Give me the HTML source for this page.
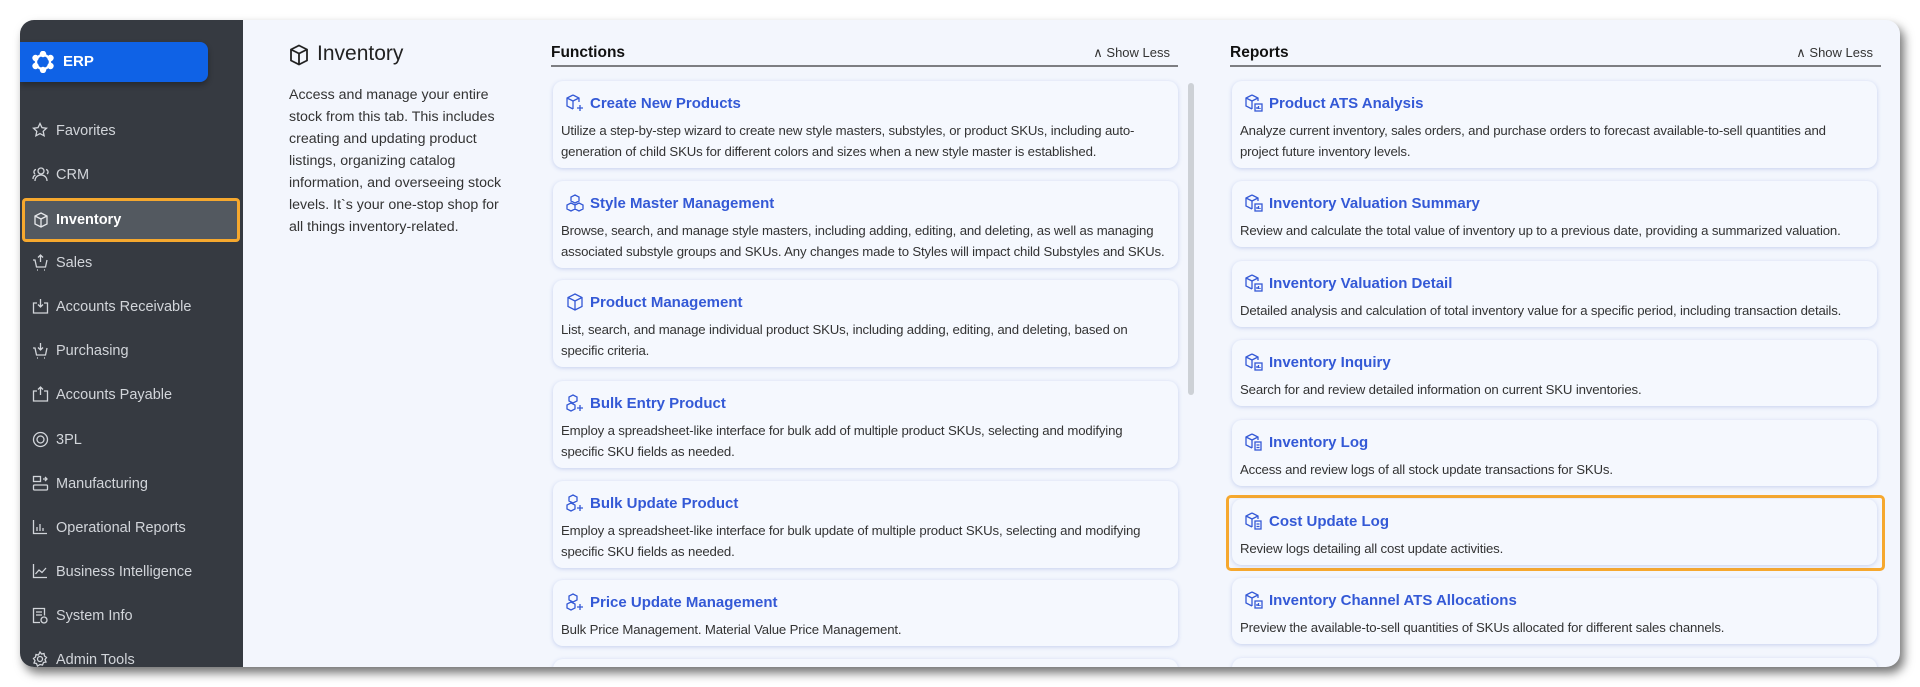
<!DOCTYPE html>
<html><head><meta charset="utf-8"><style>
*{box-sizing:border-box;margin:0;padding:0}
body{width:1920px;height:687px;background:#fff;font-family:"Liberation Sans",sans-serif;position:relative;overflow:hidden}
.win{position:absolute;left:20px;top:20px;width:1880px;height:647px;border-radius:14px;overflow:hidden;background:#f3f6fd;box-shadow:4px 6px 10px rgba(0,0,0,.55)}
.side{position:absolute;left:0;top:0;width:223px;height:647px;background:#363a41}
.erp{position:absolute;left:0;top:22px;width:188px;height:40px;background:#0f62e6;border-radius:0 8px 8px 0;color:#fff;font-weight:bold;font-size:15px;box-shadow:0 3px 6px rgba(0,0,0,.3)}
.erp svg{position:absolute;left:12px;top:9px}
.erp span{position:absolute;left:43px;top:11px}
.nav{position:absolute;left:0;width:223px;height:36px;color:#d2d5da;font-size:14.5px}
.nav svg{position:absolute;left:12px;top:9px}
.nav span{position:absolute;left:36px;top:10px}
.nav.act{left:2px;width:218px;height:44px;background:#535960;border:3px solid #f6a82e;border-radius:4px;color:#fff;font-weight:bold}
.nav.act svg{left:8px;top:11px}.nav.act span{left:31px;top:11px}
.title{position:absolute;left:269px;top:22px;font-size:21px;color:#222}
.title svg{position:absolute;left:0;top:2px}
.title span{position:absolute;left:28px;top:0;white-space:nowrap}
.desc{position:absolute;left:269px;top:64px;font-size:14.2px;line-height:22px;color:#333;white-space:nowrap}
.hd{position:absolute;top:24px;height:23px;border-bottom:2.5px solid #7d7e82;font-size:15.5px;font-weight:bold;color:#111}
.hd .sl{position:absolute;right:8px;top:1px;font-weight:normal;font-size:13px;color:#333}
.card{position:absolute;background:#f5f8fe;border-radius:10px;box-shadow:0 1px 4px rgba(80,110,200,.28)}
.card .t{position:absolute;left:13px;top:13px;color:#3459d6;font-size:15px;font-weight:bold;white-space:nowrap}
.card .t svg{vertical-align:-4px;margin-right:6px}
.card .d{position:absolute;left:8px;top:39px;font-size:13.2px;line-height:21px;color:#333;white-space:nowrap;letter-spacing:-.15px}
.f{left:533px;width:625px}
.r{left:1212px;width:645px}
.hl{position:absolute;left:1206px;top:475px;width:659px;height:76px;border:3px solid #f6a82e;border-radius:5px}
.sb{position:absolute;left:1168px;top:63px;width:6px;height:312px;background:#cdd1d6;border-radius:3px}
</style></head><body>
<div class="win">
<div class="side">
<div class="erp"><svg width="22" height="22" viewBox="0 0 22 22" fill="none" stroke="#fff" stroke-width="2.4"><circle cx="11" cy="11" r="7"/><circle cx="11" cy="3" r="2" fill="#fff"/><circle cx="11" cy="19" r="2" fill="#fff"/><circle cx="3.5" cy="7" r="2" fill="#fff"/><circle cx="18.5" cy="7" r="2" fill="#fff"/><circle cx="3.5" cy="15" r="2" fill="#fff"/><circle cx="18.5" cy="15" r="2" fill="#fff"/></svg><span>ERP</span></div>
<div class="nav" style="top:93px"><svg width="16" height="16" viewBox="0 0 16 16" fill="none" stroke="#d2d5da" stroke-width="1.3"><path d="M8 1.5l2 4.2 4.5.5-3.3 3.1.9 4.5L8 11.6l-4.1 2.2.9-4.5L1.5 6.2l4.5-.5z"/></svg><span>Favorites</span></div>
<div class="nav" style="top:137px"><svg width="18" height="16" viewBox="0 0 18 16" fill="none" stroke="#d2d5da" stroke-width="1.3"><circle cx="9" cy="5" r="3"/><path d="M3 15c0-4 3-6 6-6s6 2 6 6M4 3.5a2.5 2.5 0 0 0-1 4.5M1 13c0-2 1-3.5 2.5-4M14 3.5a2.5 2.5 0 0 1 1 4.5"/></svg><span>CRM</span></div>
<div class="nav act" style="top:178px"><svg width="16" height="16" viewBox="0 0 16 16" fill="none" stroke="#e6e8eb" stroke-width="1.3"><path d="M8 1l6 3v8l-6 3-6-3V4zM2 4l6 3 6-3M8 7v8"/></svg><span>Inventory</span></div>
<div class="nav" style="top:225px"><svg width="17" height="17" viewBox="0 0 17 17" fill="none" stroke="#d2d5da" stroke-width="1.3"><path d="M1 6h2l1.5 7h9L15 6M8.5 1v7M6 3.5l2.5-2.5 2.5 2.5M5 16h1M12 16h1"/></svg><span>Sales</span></div>
<div class="nav" style="top:269px"><svg width="17" height="17" viewBox="0 0 17 17" fill="none" stroke="#d2d5da" stroke-width="1.3"><path d="M5 5H1.5v10h14V5H12M8.5 1v8M6 6.5l2.5 2.5 2.5-2.5"/></svg><span>Accounts Receivable</span></div>
<div class="nav" style="top:313px"><svg width="17" height="17" viewBox="0 0 17 17" fill="none" stroke="#d2d5da" stroke-width="1.3"><path d="M1 6h2l1.5 7h9L15 6M8.5 1v7M6 5.5l2.5 2.5 2.5-2.5M5 16h1M12 16h1"/></svg><span>Purchasing</span></div>
<div class="nav" style="top:357px"><svg width="17" height="17" viewBox="0 0 17 17" fill="none" stroke="#d2d5da" stroke-width="1.3"><path d="M5 5H1.5v10h14V5H12M8.5 9V1M6 3.5l2.5-2.5 2.5 2.5"/></svg><span>Accounts Payable</span></div>
<div class="nav" style="top:402px"><svg width="17" height="17" viewBox="0 0 17 17" fill="none" stroke="#d2d5da" stroke-width="1.3"><circle cx="8.5" cy="8.5" r="7"/><circle cx="8.5" cy="8.5" r="3.5"/></svg><span>3PL</span></div>
<div class="nav" style="top:446px"><svg width="17" height="17" viewBox="0 0 17 17" fill="none" stroke="#d2d5da" stroke-width="1.3"><rect x="1.5" y="1.5" width="7" height="5"/><rect x="1.5" y="10" width="14" height="5" rx="1"/><path d="M11 4h4M13 2l2 2-2 2"/></svg><span>Manufacturing</span></div>
<div class="nav" style="top:490px"><svg width="16" height="16" viewBox="0 0 16 16" fill="none" stroke="#d2d5da" stroke-width="1.3"><path d="M1.5 1v13.5H15M5 12V8M8 12V5M11 12V9"/></svg><span>Operational Reports</span></div>
<div class="nav" style="top:534px"><svg width="16" height="16" viewBox="0 0 16 16" fill="none" stroke="#d2d5da" stroke-width="1.3"><path d="M1.5 1v13.5H15M3.5 11l3.5-4 3 2.5 4-4.5"/></svg><span>Business Intelligence</span></div>
<div class="nav" style="top:578px"><svg width="16" height="17" viewBox="0 0 16 17" fill="none" stroke="#d2d5da" stroke-width="1.3"><path d="M8 15.5H1.5v-14h11v7M4 5h6M4 8h6"/><circle cx="12" cy="13" r="3"/></svg><span>System Info</span></div>
<div class="nav" style="top:622px"><svg width="16" height="16" viewBox="0 0 16 16" fill="none" stroke="#d2d5da" stroke-width="1.3"><circle cx="8" cy="8" r="2.5"/><path d="M8 1l1.5 2 2.5-.5.5 2.5 2 1.5-1.5 2 1 2.5-2.5.5-1 2.5L8 13.5 5.5 15l-1-2.5L2 12l1-2.5L1.5 7.5l2-1.5.5-2.5 2.5.5z"/></svg><span>Admin Tools</span></div>
</div>

<div class="title"><svg width="20" height="22" viewBox="0 0 20 22" fill="none" stroke="#222" stroke-width="1.8"><path d="M10 1.5l8 4v11l-8 4-8-4v-11zM2 5.5l8 4 8-4M10 9.5v11"/></svg><span>Inventory</span></div>
<div class="desc">Access and manage your entire<br>stock from this tab. This includes<br>creating and updating product<br>listings, organizing catalog<br>information, and overseeing stock<br>levels. It`s your one-stop shop for<br>all things inventory-related.</div>

<div class="hd" style="left:531px;width:627px">Functions<span class="sl">∧ Show Less</span></div>
<div class="hd" style="left:1210px;width:651px">Reports<span class="sl">∧ Show Less</span></div>

<div class="sb"></div>

<div class="card f" style="top:61px;height:87px"><div class="t"><svg width="18" height="18" viewBox="0 0 18 18" fill="none" stroke="#3459d6" stroke-width="1.3"><path d="M7 1l6 3v4M7 1L1 4v8l6 3M1 4l6 3 6-3M7 7v8M14 11v6M11 14h6"/></svg>Create New Products</div><div class="d">Utilize a step-by-step wizard to create new style masters, substyles, or product SKUs, including auto-<br>generation of child SKUs for different colors and sizes when a new style master is established.</div></div>
<div class="card f" style="top:161px;height:87px"><div class="t"><svg width="18" height="18" viewBox="0 0 18 18" fill="none" stroke="#3459d6" stroke-width="1.3"><path d="M9 1l4 2v4l-4 2-4-2V3zM5 9l4 2v4l-4 2-4-2v-4zM13 9l4 2v4l-4 2-4-2v-4z"/></svg>Style Master Management</div><div class="d">Browse, search, and manage style masters, including adding, editing, and deleting, as well as managing<br>associated substyle groups and SKUs. Any changes made to Styles will impact child Substyles and SKUs.</div></div>
<div class="card f" style="top:260px;height:87px"><div class="t"><svg width="18" height="18" viewBox="0 0 18 18" fill="none" stroke="#3459d6" stroke-width="1.3"><path d="M9 1l7 3.5v9L9 17l-7-3.5v-9zM2 4.5L9 8l7-3.5M9 8v9"/></svg>Product Management</div><div class="d">List, search, and manage individual product SKUs, including adding, editing, and deleting, based on<br>specific criteria.</div></div>
<div class="card f" style="top:361px;height:87px"><div class="t"><svg width="18" height="18" viewBox="0 0 18 18" fill="none" stroke="#3459d6" stroke-width="1.3"><path d="M7 1l4 2v4L7 9 3 7V3zM5 9l4 2v4l-4 2-4-2v-4zM14 11v6M11 14h6"/></svg>Bulk Entry Product</div><div class="d">Employ a spreadsheet-like interface for bulk add of multiple product SKUs, selecting and modifying<br>specific SKU fields as needed.</div></div>
<div class="card f" style="top:461px;height:87px"><div class="t"><svg width="18" height="18" viewBox="0 0 18 18" fill="none" stroke="#3459d6" stroke-width="1.3"><path d="M7 1l4 2v4L7 9 3 7V3zM5 9l4 2v4l-4 2-4-2v-4zM14 11v6M11 14h6"/></svg>Bulk Update Product</div><div class="d">Employ a spreadsheet-like interface for bulk update of multiple product SKUs, selecting and modifying<br>specific SKU fields as needed.</div></div>
<div class="card f" style="top:560px;height:66px"><div class="t"><svg width="18" height="18" viewBox="0 0 18 18" fill="none" stroke="#3459d6" stroke-width="1.3"><path d="M7 1l4 2v4L7 9 3 7V3zM5 9l4 2v4l-4 2-4-2v-4zM14 11v6M11 14h6"/></svg>Price Update Management</div><div class="d">Bulk Price Management. Material Value Price Management.</div></div>
<div class="card f" style="top:639px;height:20px"></div>

<div class="card r" style="top:61px;height:87px"><div class="t"><svg width="18" height="18" viewBox="0 0 18 18" fill="none" stroke="#3459d6" stroke-width="1.3"><path d="M7 1l6 3v3M7 1L1 4v8l6 3M1 4l6 3 6-3M7 7v8"/><rect x="10" y="10" width="7" height="7"/><path d="M12 15v-2M13.5 15v-3M15 15v-1"/></svg>Product ATS Analysis</div><div class="d">Analyze current inventory, sales orders, and purchase orders to forecast available-to-sell quantities and<br>project future inventory levels.</div></div>
<div class="card r" style="top:161px;height:66px"><div class="t"><svg width="18" height="18" viewBox="0 0 18 18" fill="none" stroke="#3459d6" stroke-width="1.3"><path d="M7 1l6 3v3M7 1L1 4v8l6 3M1 4l6 3 6-3M7 7v8"/><rect x="10" y="10" width="7" height="7"/><path d="M12 15v-2M13.5 15v-3M15 15v-1"/></svg>Inventory Valuation Summary</div><div class="d">Review and calculate the total value of inventory up to a previous date, providing a summarized valuation.</div></div>
<div class="card r" style="top:241px;height:66px"><div class="t"><svg width="18" height="18" viewBox="0 0 18 18" fill="none" stroke="#3459d6" stroke-width="1.3"><path d="M7 1l6 3v3M7 1L1 4v8l6 3M1 4l6 3 6-3M7 7v8"/><rect x="10" y="10" width="7" height="7"/><path d="M12 15v-2M13.5 15v-3M15 15v-1"/></svg>Inventory Valuation Detail</div><div class="d">Detailed analysis and calculation of total inventory value for a specific period, including transaction details.</div></div>
<div class="card r" style="top:320px;height:66px"><div class="t"><svg width="18" height="18" viewBox="0 0 18 18" fill="none" stroke="#3459d6" stroke-width="1.3"><path d="M7 1l6 3v3M7 1L1 4v8l6 3M1 4l6 3 6-3M7 7v8"/><rect x="10" y="10" width="7" height="7"/><path d="M12 15v-2M13.5 15v-3M15 15v-1"/></svg>Inventory Inquiry</div><div class="d">Search for and review detailed information on current SKU inventories.</div></div>
<div class="card r" style="top:400px;height:66px"><div class="t"><svg width="18" height="18" viewBox="0 0 18 18" fill="none" stroke="#3459d6" stroke-width="1.3"><path d="M7 1l6 3v3M7 1L1 4v8l6 3M1 4l6 3 6-3M7 7v8"/><rect x="10" y="9" width="6" height="8"/><path d="M11.5 12h3M11.5 14.5h3"/></svg>Inventory Log</div><div class="d">Access and review logs of all stock update transactions for SKUs.</div></div>
<div class="hl"></div>
<div class="card r" style="top:479px;height:66px"><div class="t"><svg width="18" height="18" viewBox="0 0 18 18" fill="none" stroke="#3459d6" stroke-width="1.3"><path d="M7 1l6 3v3M7 1L1 4v8l6 3M1 4l6 3 6-3M7 7v8"/><rect x="10" y="9" width="6" height="8"/><path d="M11.5 12h3M11.5 14.5h3"/></svg>Cost Update Log</div><div class="d">Review logs detailing all cost update activities.</div></div>
<div class="card r" style="top:558px;height:66px"><div class="t"><svg width="18" height="18" viewBox="0 0 18 18" fill="none" stroke="#3459d6" stroke-width="1.3"><path d="M7 1l6 3v3M7 1L1 4v8l6 3M1 4l6 3 6-3M7 7v8"/><rect x="10" y="10" width="7" height="7"/><path d="M12 15v-2M13.5 15v-3M15 15v-1"/></svg>Inventory Channel ATS Allocations</div><div class="d">Preview the available-to-sell quantities of SKUs allocated for different sales channels.</div></div>
<div class="card r" style="top:638px;height:20px"></div>
</div>
</body></html>
